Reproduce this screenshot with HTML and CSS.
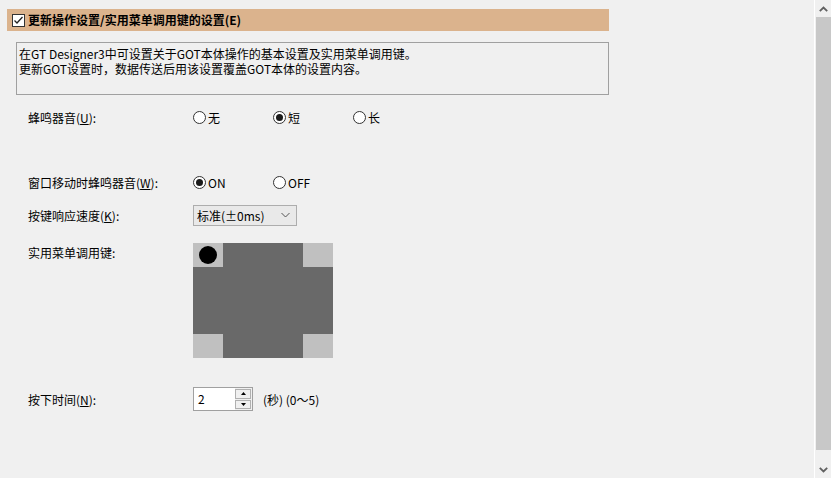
FILE: index.html
```html
<!DOCTYPE html>
<html lang="zh-CN">
<head>
    <meta charset="UTF-8">
    <title>更新操作设置/实用菜单调用键的设置</title>
    <link rel="stylesheet" href="styles.css">
</head>
<body>
    <div class="page">
        <div class="content">
            <div class="section-head">
                <span class="check">
                    <svg width="11" height="11" viewBox="0 0 11 11"><path d="M1.5 5.5 L4 8 L9.5 2" fill="none" stroke="#222" stroke-width="1.3"/></svg>
                </span>
                <span class="section-title">更新操作设置/实用菜单调用键的设置(E)</span>
            </div>

            <div class="desc">
                在GT Designer3中可设置关于GOT本体操作的基本设置及实用菜单调用键。<br>
                更新GOT设置时，数据传送后用该设置覆盖GOT本体的设置内容。
            </div>

            <div class="row row-buzzer">
                <div class="label">蜂鸣器音(<u>U</u>):</div>
                <div class="options">
                    <label class="radio"><span class="dot"></span>无</label>
                    <label class="radio"><span class="dot on"></span>短</label>
                    <label class="radio"><span class="dot"></span>长</label>
                </div>
            </div>

            <div class="row row-window">
                <div class="label">窗口移动时蜂鸣器音(<u>W</u>):</div>
                <div class="options">
                    <label class="radio"><span class="dot on"></span>ON</label>
                    <label class="radio"><span class="dot"></span>OFF</label>
                </div>
            </div>

            <div class="row row-speed">
                <div class="label">按键响应速度(<u>K</u>):</div>
                <div class="select">
                    <span>标准(±0ms)</span>
                    <svg width="9" height="6" viewBox="0 0 9 6"><path d="M0.5 1 L4.5 5 L8.5 1" fill="none" stroke="#555" stroke-width="1"/></svg>
                </div>
            </div>

            <div class="row row-keys">
                <div class="label">实用菜单调用键:</div>
                <div class="keypad">
                    <div class="cell corner"><span class="marker"></span></div>
                    <div class="cell"></div>
                    <div class="cell corner"></div>
                    <div class="cell"></div>
                    <div class="cell"></div>
                    <div class="cell"></div>
                    <div class="cell corner"></div>
                    <div class="cell"></div>
                    <div class="cell corner"></div>
                </div>
            </div>

            <div class="row row-time">
                <div class="label">按下时间(<u>N</u>):</div>
                <div class="spin-wrap">
                    <div class="spin">
                        <span class="spin-value">2</span>
                        <div class="spin-btns">
                            <span class="spin-btn"><svg width="5" height="3" viewBox="0 0 5 3"><path d="M0 3 L2.5 0 L5 3 Z" fill="#000"/></svg></span>
                            <span class="spin-btn"><svg width="5" height="3" viewBox="0 0 5 3"><path d="M0 0 L2.5 3 L5 0 Z" fill="#000"/></svg></span>
                        </div>
                    </div>
                    <span class="unit">(秒) (0～5)</span>
                </div>
            </div>
        </div>

        <div class="scrollbar">
            <div class="arrow">
                <svg width="9" height="6" viewBox="0 0 9 6"><path d="M0.8 5.2 L4.5 1.5 L8.2 5.2" fill="none" stroke="#606060" stroke-width="1.8"/></svg>
            </div>
            <div class="thumb"></div>
            <div class="arrow">
                <svg width="9" height="6" viewBox="0 0 9 6"><path d="M0.8 0.8 L4.5 4.5 L8.2 0.8" fill="none" stroke="#606060" stroke-width="1.8"/></svg>
            </div>
        </div>
    </div>
</body>
</html>
```

FILE: styles.css
```css
* {
    margin: 0;
    padding: 0;
    box-sizing: border-box;
}

html, body {
    height: 100%;
}

body {
    background-color: #f0f0f0;
    color: #000;
    font-family: "Noto Sans CJK SC", "Noto Sans", sans-serif;
    font-size: 12px;
    overflow: hidden;
}

.page {
    display: flex;
    height: 478px;
}

.content {
    flex: 1;
    padding: 9px 0 0 7px;
}

/* section header bar */
.section-head {
    width: 602px;
    height: 22px;
    background-color: #dbb38d;
    display: flex;
    align-items: center;
    padding-left: 5px;
}

.check {
    width: 13px;
    height: 13px;
    border: 1px solid #333;
    background-color: #fff;
    display: flex;
    align-items: center;
    justify-content: center;
    margin-right: 3px;
}

.section-title {
    font-weight: bold;
    font-size: 12px;
    line-height: 14px;
}

.desc {
    width: 593px;
    height: 53px;
    margin: 11px 0 0 9px;
    border: 1px solid #a0a0a0;
    padding: 3px 2px;
    line-height: 15px;
}

/* form rows */
.row {
    display: flex;
    padding-left: 21px;
}

.label {
    width: 165px;
    flex-shrink: 0;
}

.row-buzzer {
    margin-top: 11px;
    height: 22px;
    align-items: center;
}

.row-window {
    margin-top: 43px;
    height: 22px;
    align-items: center;
}

.row-speed {
    margin-top: 11px;
    height: 22px;
    align-items: center;
}

.row-keys {
    margin-top: 17px;
}

.row-keys .label {
    line-height: 20px;
}

.row-time {
    margin-top: 29px;
    height: 24px;
    align-items: center;
}

.options {
    display: flex;
}

.radio {
    width: 80px;
    display: flex;
    align-items: center;
}

.dot {
    width: 13px;
    height: 13px;
    border: 1px solid #333;
    border-radius: 50%;
    background-color: #fff;
    margin-right: 2px;
    display: flex;
    align-items: center;
    justify-content: center;
}

.dot.on::after {
    content: "";
    width: 7px;
    height: 7px;
    border-radius: 50%;
    background-color: #1a1a1a;
}

.select {
    width: 104px;
    height: 21px;
    border: 1px solid #adadad;
    background-color: #e9e9e9;
    display: flex;
    align-items: center;
    justify-content: space-between;
    padding: 0 6px 0 3px;
}

/* key layout picker */
.keypad {
    display: grid;
    grid-template-columns: 30px 80px 30px;
    grid-template-rows: 24px 67px 24px;
    width: 140px;
}

.cell {
    background-color: #696969;
}

.cell.corner {
    background-color: #c0c0c0;
}

.marker {
    display: block;
    width: 18px;
    height: 18px;
    border-radius: 50%;
    background-color: #000;
    margin: 3px 0 0 6px;
}

.spin-wrap {
    display: flex;
    align-items: center;
}

.spin {
    width: 60px;
    height: 24px;
    border: 1px solid #a0a0a0;
    background-color: #fff;
    display: flex;
    justify-content: space-between;
}

.spin-value {
    padding: 3px 0 0 4px;
    line-height: 16px;
}

.spin-btns {
    width: 17px;
    display: flex;
    flex-direction: column;
    gap: 1px;
    padding: 1px 1px 1px 0;
    background-color: #f0f0f0;
}

.spin-btn {
    flex: 1;
    border: 1px solid #b0b0b0;
    background-color: #f0f0f0;
    display: flex;
    align-items: center;
    justify-content: center;
}

.unit {
    margin-left: 10px;
}

/* vertical scrollbar */
.scrollbar {
    width: 17px;
    border-left: 1px solid #fff;
    background-color: #f0f0f0;
    display: flex;
    flex-direction: column;
    align-items: center;
}

.arrow {
    height: 17px;
    width: 100%;
    display: flex;
    align-items: center;
    justify-content: center;
}

.thumb {
    flex: 1;
    width: 15px;
    background-color: #c8c8c8;
    margin-bottom: 11px;
}
```
